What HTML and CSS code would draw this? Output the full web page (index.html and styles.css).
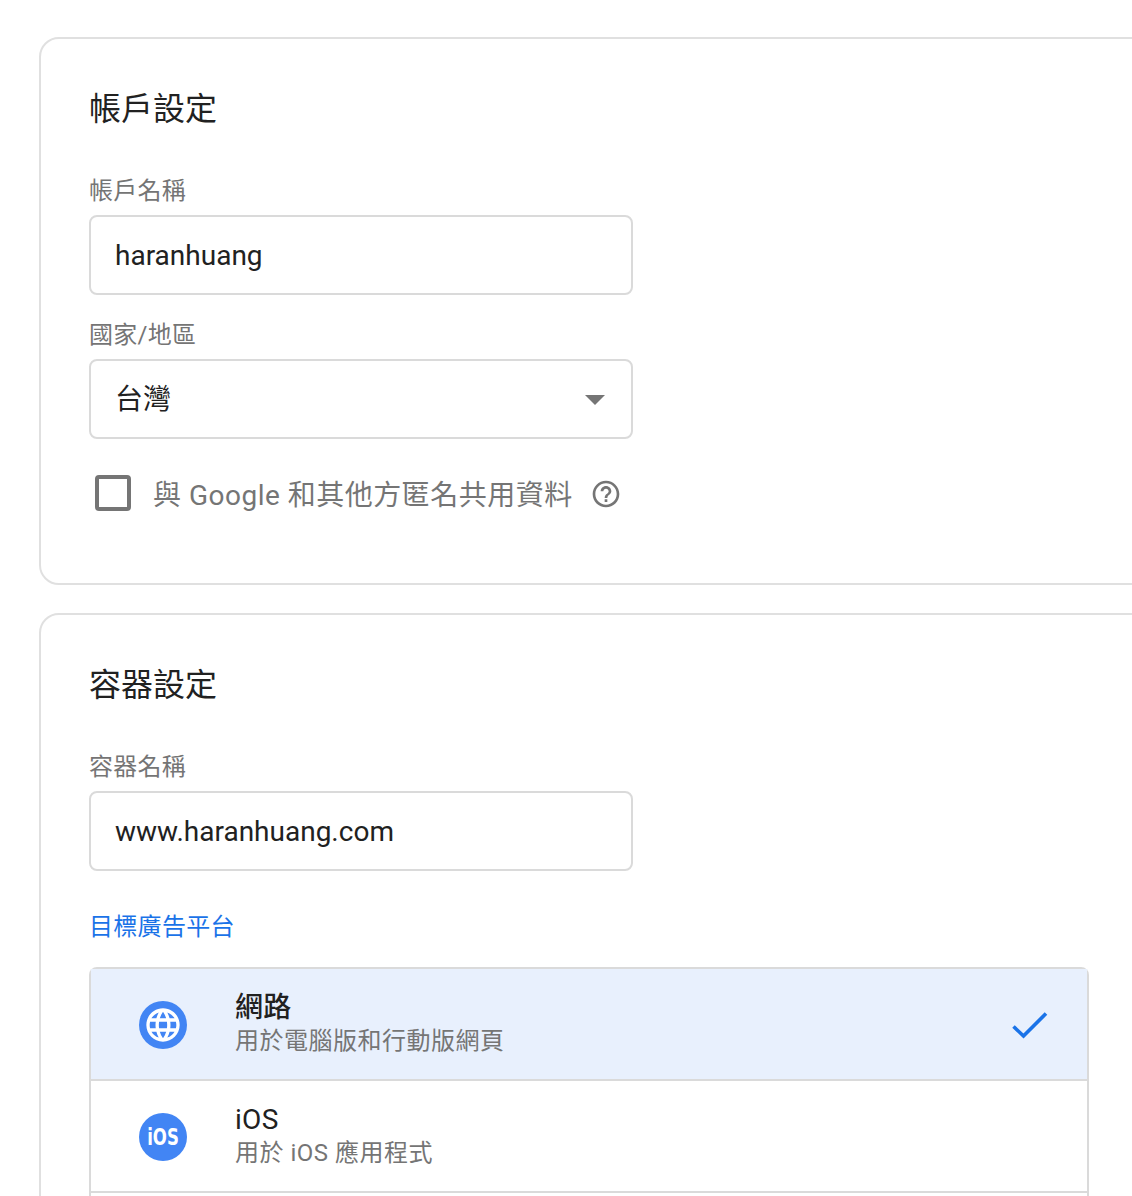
FILE: index.html
```html
<!DOCTYPE html>
<html lang="zh-TW">
<head>
    <meta charset="UTF-8">
    <meta name="viewport" content="width=device-width, initial-scale=1.0">
    <title>帳戶設定</title>
    <link rel="stylesheet" href="styles.css">
</head>
<body>
    <div class="card card-account">
        <h2 class="card-title">帳戶設定</h2>
        <div class="field-label">帳戶名稱</div>
        <div class="field-box">haranhuang</div>
        <div class="field-label field-label-next">國家/地區</div>
        <div class="field-box field-select">
            <span class="select-value">台灣</span>
            <span class="select-arrow"></span>
        </div>
        <div class="share-row">
            <span class="checkbox"></span>
            <span class="share-text">與 Google 和其他方匿名共用資料</span>
            <svg class="help-icon" viewBox="0 0 24 24" width="32" height="32">
                <path fill="#757575" d="M11 18h2v-2h-2v2zm1-16C6.48 2 2 6.48 2 12s4.48 10 10 10 10-4.48 10-10S17.52 2 12 2zm0 18c-4.41 0-8-3.59-8-8s3.59-8 8-8 8 3.59 8 8-3.59 8-8 8zm0-14c-2.21 0-4 1.79-4 4h2c0-1.1.9-2 2-2s2 .9 2 2c0 2-3 1.75-3 5h2c0-2.25 3-2.5 3-5 0-2.21-1.79-4-4-4z"/>
            </svg>
        </div>
    </div>

    <div class="card card-container">
        <h2 class="card-title">容器設定</h2>
        <div class="field-label">容器名稱</div>
        <div class="field-box">www.haranhuang.com</div>
        <div class="platform-label">目標廣告平台</div>
        <div class="platform-list">
            <div class="platform-item platform-selected">
                <span class="platform-icon">
                    <svg viewBox="0 0 24 24" width="40" height="40">
                        <path fill="#fff" d="M11.99 2C6.47 2 2 6.48 2 12s4.47 10 9.99 10C17.52 22 22 17.52 22 12S17.52 2 11.99 2zm6.93 6h-2.95c-.32-1.25-.78-2.45-1.38-3.56 1.84.63 3.37 1.91 4.33 3.56zM12 4.04c.83 1.2 1.48 2.53 1.91 3.96h-3.82c.43-1.43 1.08-2.76 1.91-3.96zM4.26 14C4.1 13.36 4 12.69 4 12s.1-1.36.26-2h3.38c-.08.66-.14 1.32-.14 2s.06 1.34.14 2H4.26zm.82 2h2.95c.32 1.25.78 2.45 1.38 3.56-1.84-.63-3.37-1.9-4.33-3.56zm2.95-8H5.08c.96-1.66 2.49-2.93 4.33-3.56C8.81 5.55 8.35 6.75 8.03 8zM12 19.96c-.83-1.2-1.48-2.53-1.91-3.96h3.82c-.43 1.43-1.08 2.76-1.91 3.96zM14.34 14H9.66c-.09-.66-.16-1.32-.16-2s.07-1.35.16-2h4.68c.09.65.16 1.32.16 2s-.07 1.34-.16 2zm.25 5.56c.6-1.11 1.06-2.31 1.38-3.56h2.95c-.96 1.65-2.49 2.93-4.33 3.56zM16.36 14c.08-.66.14-1.32.14-2s-.06-1.34-.14-2h3.38c.16.64.26 1.31.26 2s-.1 1.36-.26 2h-3.38z"/>
                    </svg>
                </span>
                <div class="platform-text">
                    <div class="platform-name platform-name-bold">網路</div>
                    <div class="platform-desc">用於電腦版和行動版網頁</div>
                </div>
                <svg class="platform-check" viewBox="0 0 36 30" width="36" height="30">
                    <path fill="none" stroke="#1a73e8" stroke-width="3.6" d="M1.5 15.5 L11.5 25 L34 2.5"/>
                </svg>
            </div>
            <div class="platform-item">
                <span class="platform-icon"><span class="ios-mark">iOS</span></span>
                <div class="platform-text">
                    <div class="platform-name">iOS</div>
                    <div class="platform-desc">用於 iOS 應用程式</div>
                </div>
            </div>
        </div>
    </div>
</body>
</html>
```

FILE: styles.css
```css
* { margin: 0; padding: 0; box-sizing: border-box; }
html, body { height: 1196px; overflow: hidden; }
body { font-family: Roboto, "Noto Sans CJK TC", sans-serif; background: #fff; color: #212121; padding: 37px 0 0 39px; }

.card { width: 1150px; border: 2px solid #e0e0e0; border-radius: 20px; padding: 0 48px; background: #fff; }
.card-account { height: 548px; margin-bottom: 28px; }
.card-container { height: 800px; }
.card-title { font-size: 32px; font-weight: 400; line-height: 44px; padding-top: 48px; height: 92px; color: #212121; }

.field-label { font-size: 24px; line-height: 32px; letter-spacing: 0.25px; margin-top: 44px; margin-bottom: 8px; color: #757575; }
.field-label-next { margin-top: 24px; }
.field-box { width: 544px; height: 80px; border: 2px solid #dadada; border-radius: 8px; padding: 0 24px; font-size: 28px; color: #212121; display: flex; align-items: center; justify-content: space-between; }
.select-value { margin-bottom: 5px; }
.select-arrow { width: 0; height: 0; border-left: 10px solid transparent; border-right: 10px solid transparent; border-top: 10px solid #757575; margin-right: 2px; margin-top: 2px; }

.share-row { display: flex; align-items: center; margin-top: 36px; padding-left: 6px; height: 36px; }
.checkbox { width: 36px; height: 36px; border: 4px solid #757575; border-radius: 4px; flex: none; }
.share-text { font-size: 28px; letter-spacing: 0.5px; color: #757575; margin-left: 22px; white-space: nowrap; }
.help-icon { margin-left: 17px; margin-top: 2px; flex: none; }

.platform-label { font-size: 24px; line-height: 32px; letter-spacing: 0.3px; margin-top: 40px; color: #1a73e8; }
.platform-list { width: 1000px; height: 240px; margin-top: 24px; border: 2px solid #dadada; border-bottom: 0; border-radius: 8px 8px 0 0; }
.platform-item { height: 112px; display: flex; align-items: center; border-bottom: 2px solid #dadada; padding-left: 48px; }
.platform-selected { background: #e8f0fd; }
.platform-icon { width: 48px; height: 48px; margin-top: 2px; border-radius: 50%; background: #4285f4; display: flex; align-items: center; justify-content: center; flex: none; }
.ios-mark { font-family: "DejaVu Sans", sans-serif; font-size: 23px; font-weight: bold; color: #fff; transform: scaleX(0.72); letter-spacing: 0; }
.platform-text { margin-left: 48px; flex: 1; }
.platform-name { font-size: 28px; line-height: 34px; letter-spacing: 0.3px; color: #212121; }
.platform-name-bold { font-weight: 500; }
.platform-desc { font-size: 24px; line-height: 32px; letter-spacing: 0.5px; color: #757575; }
.platform-check { margin-right: 39px; margin-top: 4px; flex: none; }
```
